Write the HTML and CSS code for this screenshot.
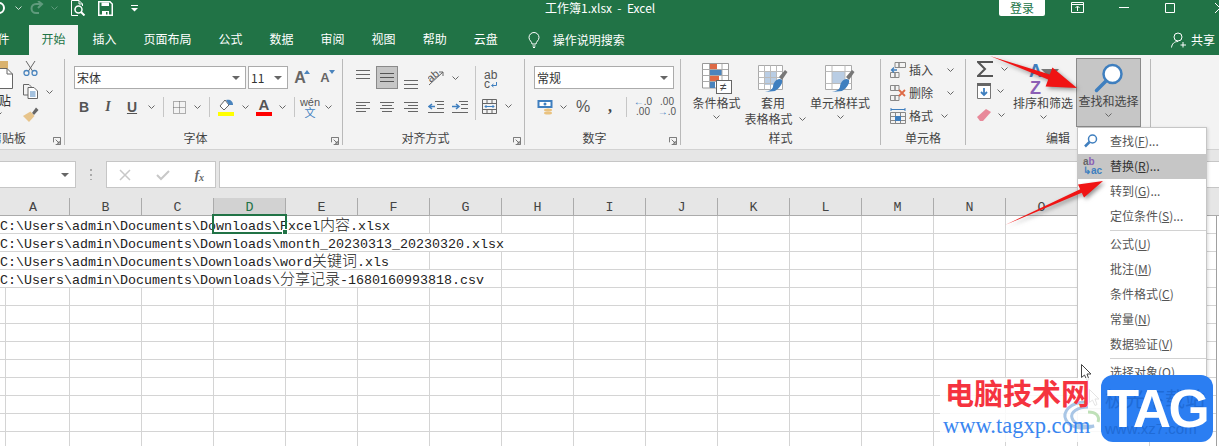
FILE: index.html
```html
<!DOCTYPE html>
<html lang="zh-CN">
<head>
<meta charset="utf-8">
<title>工作簿1.xlsx - Excel</title>
<link rel="stylesheet" href="styles.css">
</head>
<body>
<svg class="defs" width="0" height="0" aria-hidden="true">
  <symbol id="chev" viewBox="0 0 7 4"><path d="M.5.5 3.5 3.5 6.5.5" fill="none" stroke="#666" stroke-width="1"/></symbol>
  <symbol id="launch" viewBox="0 0 9 9"><path d="M.5 6V.5H8.5M8.5.5V8.5H3M3 3 7 7M7 4.5V7H4.5" fill="none" stroke="#666" stroke-width="1"/></symbol>
</svg>

<header class="titlebar">
  <div class="qat">
    <svg class="ic-undo" width="6" height="14" viewBox="0 0 6 14"><path d="M0 2A5 5 0 1 1 0 12" transform="translate(-1 0)" fill="none" stroke="#fff" stroke-width="2"/></svg>
    <svg class="ic-chev1" width="7" height="4"><path d="M.5.5 3.5 3.5 6.5.5" fill="none" stroke="#cfe0d6"/></svg>
    <svg class="ic-redo" width="15" height="14" viewBox="0 0 15 14"><path d="M11 3H6a4.500 4.500 0 0 0 0 9H9M8 0l4 3-4 4" fill="none" stroke="#5f9a7c" stroke-width="2"/></svg>
    <svg class="ic-chev2" width="7" height="4"><path d="M.5.5 3.500 3.500 6.500.5" fill="none" stroke="#5f9a7c"/></svg>
    <svg class="ic-prev" width="16" height="16" viewBox="0 0 16 16"><path d="M9 .5H1.500V15.500H8M9 .5V4H12.500V6M9 .5 12.500 4" fill="none" stroke="#fff"/><circle cx="8.500" cy="9.500" r="3.500" fill="none" stroke="#fff" stroke-width="1.500"/><path d="M11 12l3.500 3.500" stroke="#fff" stroke-width="2"/></svg>
    <svg class="ic-save" width="15" height="15" viewBox="0 0 15 15"><path d="M.75.75H12L14.250 3V14.250H.75Z" fill="none" stroke="#fff" stroke-width="1.500"/><path d="M3.500 1.500H11V5H3.500ZM4 10H11V14H4Z" fill="#fff"/><path d="M8 11H9.500V13.500H8Z" fill="#217346"/></svg>
    <svg class="ic-qat" width="7" height="7" viewBox="0 0 7 7"><path d="M0 .5H7" stroke="#fff"/><path d="M0 3H7L3.500 6.500Z" fill="#fff"/></svg>
  </div>
  <div class="doc-title">工作簿1.xlsx&nbsp;&nbsp;-&nbsp;&nbsp;Excel</div>
  <div class="win">
    <button class="login">登录</button>
    <svg class="ic-disp" width="13" height="11" viewBox="0 0 13 11"><path d="M.5.500H12.500V10.500H.5ZM.5 2.500H12.500M6.500 9V4.500M4.500 6 6.500 4 8.500 6" fill="none" stroke="#fff"/></svg>
    <svg class="ic-min" width="10" height="1"><path d="M0 .5H10" stroke="#fff"/></svg>
    <svg class="ic-max" width="10" height="10"><path d="M.5.500H9.500V9.500H.5Z" fill="none" stroke="#fff"/></svg>
    <svg class="ic-close" width="10" height="10"><path d="M0 0 10 10M10 0 0 10" stroke="#fff"/></svg>
  </div>
</header>

<nav class="tabs">
  <span class="tab tab-file">文件</span>
  <span class="tab tab-on">开始</span>
  <span class="tab">插入</span>
  <span class="tab">页面布局</span>
  <span class="tab">公式</span>
  <span class="tab">数据</span>
  <span class="tab">审阅</span>
  <span class="tab">视图</span>
  <span class="tab">帮助</span>
  <span class="tab">云盘</span>
  <span class="tab tab-search">
    <svg width="12" height="16" viewBox="0 0 12 16"><path d="M4 12C4 9.500 1 8.500 1 5.500A5 5 0 0 1 11 5.500C11 8.500 8 9.500 8 12ZM4.500 14H7.500M5 15.500H7" fill="none" stroke="#fff"/></svg>
    操作说明搜索
  </span>
  <span class="share">
    <svg width="16" height="16" viewBox="0 0 16 16"><circle cx="7" cy="5" r="4" fill="none" stroke="#fff"/><path d="M.5 15.500C1 11.500 3.500 9.500 7 9.500M12 10V15.500M9.500 13H15" fill="none" stroke="#fff"/></svg>
    共享
  </span>
</nav>

<section class="ribbon">
  <div class="group g-clip">
    <div class="body clip-body">
      <div class="paste">
        <svg width="16" height="28" viewBox="0 0 16 28"><rect x="0" y="0" width="10" height="8" fill="#d9b26f"/><path d="M.5 7.500H9L14.500 13V27.500H.5Z" fill="#fff" stroke="#666"/><path d="M9 7.500V13H14.500" fill="none" stroke="#666"/></svg>
        <span class="paste-text">贴</span>
        <svg class="paste-chev" width="7" height="4"><use href="#chev"/></svg>
      </div>
      <div class="clip-tools">
        <svg width="15" height="15" viewBox="0 0 15 15"><path d="M3 0 9.500 10M12 0 5.500 10" stroke="#666" fill="none"/><circle cx="3.500" cy="12" r="2.500" fill="none" stroke="#4a84bd" stroke-width="1.300"/><circle cx="11.500" cy="12" r="2.500" fill="none" stroke="#4a84bd" stroke-width="1.300"/></svg>
        <div class="copy-row">
          <svg width="15" height="15" viewBox="0 0 15 15"><path d="M.5.500H6L8 2.500V11H.5Z" fill="#f3f3f3" stroke="#666"/><path d="M5 3.500H11L14.500 7V14.500H5Z" fill="#fff" stroke="#666"/><path d="M7 8H12.500M7 10H12.500M7 12H12.500" stroke="#4a84bd"/></svg>
          <svg class="copy-chev" width="7" height="4"><use href="#chev"/></svg>
        </div>
        <svg width="16" height="15" viewBox="0 0 16 15"><path d="M9 6 13 .5 15.500 3 11 8Z" fill="#666"/><path d="M0 9 7.500 4.500 11.500 9 6 15Z" fill="#e7c48b"/></svg>
      </div>
    </div>
    <div class="label clip-label">剪贴板</div>
    <svg class="launch" width="8" height="8"><use href="#launch"/></svg>
  </div>

  <div class="group g-font">
    <div class="body font-body">
      <div class="row1">
        <div class="combo combo-font"><span>宋体</span><i class="tri"></i></div>
        <div class="combo combo-size"><span>11</span><i class="tri"></i></div>
        <div class="t w24 grow-a">A<svg width="6" height="4"><path d="M0 4 3 0 6 4Z" fill="#4a84bd"/></svg></div>
        <div class="t w24 shrink-a">A<svg width="6" height="4"><path d="M0 0 3 4 6 0Z" fill="#4a84bd"/></svg></div>
      </div>
      <div class="row2 font-row2">
        <div class="t w24 fb">B</div>
        <div class="t w24 fi">I</div>
        <div class="t w24 fu">U</div>
        <div class="t w14"><svg width="7" height="4"><use href="#chev"/></svg></div>
        <div class="t w10"><i class="sep"></i></div>
        <div class="t w22"><svg width="13" height="13" viewBox="0 0 13 13"><path d="M.5.500H12.500V12.500H.5ZM6.500.5V12.500M.5 6.500H12.500" fill="none" stroke="#666" stroke-dasharray="1 1"/></svg></div>
        <div class="t w14"><svg width="7" height="4"><use href="#chev"/></svg></div>
        <div class="t w10"><i class="sep"></i></div>
        <div class="t w24"><svg width="16" height="17" viewBox="0 0 16 17"><path d="M2 7 7 1 11 6 6 11Z" fill="#fff" stroke="#666"/><path d="M8 1C12 0 15 2 15 6L11 6Z" fill="#4a84bd"/><rect y="13" width="16" height="4" fill="#ff0"/></svg></div>
        <div class="t w14"><svg width="7" height="4"><use href="#chev"/></svg></div>
        <div class="t w24 color-a">A<i class="redbar"></i></div>
        <div class="t w13"><svg width="7" height="4"><use href="#chev"/></svg></div>
        <div class="t w10"><i class="sep"></i></div>
        <div class="t w22 wen"><span>wén</span><b>文</b></div>
        <div class="t w14"><svg width="7" height="4"><use href="#chev"/></svg></div>
      </div>
    </div>
    <div class="label lb-l">字体</div>
    <svg class="launch" width="8" height="8"><use href="#launch"/></svg>
  </div>

  <div class="group g-align">
    <div class="body align-body">
      <div class="align-left">
        <div class="row1 gap2">
          <div class="t w22 top-a"><svg width="14" height="9" viewBox="0 0 14 9"><path d="M0 .5H14M0 4.500H14M0 8.500H14" stroke="#666"/></svg></div>
          <div class="t w22 active"><svg width="14" height="9" viewBox="0 0 14 9"><path d="M0 .5H14M0 4.500H14M0 8.500H14" stroke="#555"/></svg></div>
          <div class="t w22 bot-a"><svg width="14" height="9" viewBox="0 0 14 9"><path d="M0 .5H14M0 4.500H14M0 8.500H14" stroke="#666"/></svg></div>
          <div class="t w24"><svg width="16" height="16" viewBox="0 0 16 16"><path d="M1 15 15 2M15 2H11M15 2V6" fill="none" stroke="#666"/><text x="0" y="10" class="svg-ab" transform="rotate(-40 5 8)">ab</text></svg></div>
          <div class="t w10"><svg width="7" height="4"><use href="#chev"/></svg></div>
        </div>
        <div class="row2 gap2">
          <div class="t w22"><svg width="14" height="11" viewBox="0 0 14 11"><path d="M0 .5H14M0 3.500H10M0 6.500H14M0 9.500H10" stroke="#666"/></svg></div>
          <div class="t w22"><svg width="14" height="11" viewBox="0 0 14 11"><path d="M0 .5H14M2 3.500H12M0 6.500H14M2 9.500H12" stroke="#666"/></svg></div>
          <div class="t w22"><svg width="14" height="11" viewBox="0 0 14 11"><path d="M0 .5H14M4 3.500H14M0 6.500H14M4 9.500H14" stroke="#666"/></svg></div>
          <div class="t w24"><svg width="16" height="12" viewBox="0 0 16 12"><path d="M7 .5H16M9 3.500H16M9 7.500H16M0 11.500H16" stroke="#666"/><path d="M7 5.500H2M4 3 1 5.500 4 8" fill="none" stroke="#3f7fbf" stroke-width="1.500"/></svg></div>
          <div class="t w20"><svg width="16" height="12" viewBox="0 0 16 12"><path d="M7 .5H16M9 3.500H16M9 7.500H16M0 11.500H16" stroke="#666"/><path d="M0 5.500H6M4 3 7 5.500 4 8" fill="none" stroke="#3f7fbf" stroke-width="1.500"/></svg></div>
        </div>
      </div>
      <i class="vsep"></i>
      <div class="align-right">
        <div class="wrap-ic"><span>ab</span><span>c<svg width="6" height="6" viewBox="0 0 6 6"><path d="M5.500 0V3.500H1M2.500 2 .5 3.500 2.500 5" fill="none" stroke="#3f7fbf"/></svg></span></div>
        <div class="merge">
          <svg width="15" height="15" viewBox="0 0 15 15"><path d="M.5.500H14.500V14.500H.5ZM.5 4.500H14.500M.5 10.500H14.500M5 .5V4.500M10 .5V4.500M5 10.500V14.500M10 10.500V14.500" fill="none" stroke="#666"/><path d="M3 7.500H12M4.500 6 3 7.500 4.500 9M10.500 6 12 7.500 10.500 9" fill="none" stroke="#3f7fbf"/></svg>
          <svg width="7" height="4"><use href="#chev"/></svg>
        </div>
      </div>
    </div>
    <div class="label lb-l">对齐方式</div>
    <svg class="launch" width="8" height="8"><use href="#launch"/></svg>
  </div>

  <div class="group g-num">
    <div class="body num-body">
      <div class="combo combo-num"><span>常规</span><i class="tri"></i></div>
      <div class="row2 num-row2">
        <div class="t w18"><svg width="17" height="17" viewBox="0 0 17 17"><rect x=".5" y="1" width="15" height="8" fill="#3f7fbf"/><rect x="2.500" y="3" width="11" height="4" fill="#fff"/><circle cx="8" cy="5" r="1.500" fill="#3f7fbf"/><ellipse cx="11" cy="11" rx="4" ry="1.500" fill="#e9c27f"/><ellipse cx="11" cy="14" rx="4" ry="1.500" fill="#e9c27f"/></svg></div>
        <div class="t w14 ml2"><svg width="7" height="4"><use href="#chev"/></svg></div>
        <div class="t w24 pct">%</div>
        <div class="t w22 comma">,</div>
        <div class="t w10"><i class="sep"></i></div>
        <div class="t w24 dec"><span><em>←</em>.0</span><span>.00</span></div>
        <div class="t w24 dec"><span>.00</span><span><em>→</em>.0</span></div>
      </div>
    </div>
    <div class="label lb-l">数字</div>
    <svg class="launch" width="8" height="8"><use href="#launch"/></svg>
  </div>

  <div class="group g-style">
    <div class="body style-body">
      <div class="big b1">
        <svg class="big-ic" width="30" height="32" viewBox="0 0 30 32"><path d="M.5.500H26.500V25H.5Z" fill="#fff" stroke="#999"/><rect x="8" y="1" width="7" height="5" fill="#de6a46"/><rect x="8" y="7" width="12" height="5" fill="#4a84bd"/><rect x="8" y="13" width="9" height="5" fill="#de6a46"/><rect x="8" y="19" width="5" height="6" fill="#4a84bd"/><path d="M7.500 1V25M20 1V22M.5 6.500H26M.5 12.500H26M.5 18.500H26" stroke="#aaa" fill="none"/><rect x="14.500" y="17.500" width="15" height="13" fill="#fff" stroke="#666"/><text x="18" y="28" class="svg-ne">≠</text></svg>
        <span class="big-t">条件格式</span>
        <svg class="big-c" width="7" height="4"><use href="#chev"/></svg>
      </div>
      <div class="big b2">
        <svg class="big-ic" width="30" height="32" viewBox="0 0 30 32"><path d="M.5 2.500H24.500V26.500H.5Z" fill="#fff" stroke="#aaa"/><rect x="6" y="8" width="13" height="14" fill="#b9cde4"/><path d="M6.500 2.500V26.500M12.500 2.500V26.500M18.500 2.500V26.500M.5 8.500H24.500M.5 14.500H24.500M.5 20.500H24.500" stroke="#bbb" fill="none"/><path d="M21 14 27 7 29.500 9 24 17Z" fill="#777"/><path d="M15 24C15 19 20 14 24 17 25 20 22 25 17 28L7 29C11 28 14 27 15 24Z" fill="#3f7fbf"/></svg>
        <span class="big-t">套用</span>
        <span class="big-t two">表格格式<svg width="7" height="4"><use href="#chev"/></svg></span>
      </div>
      <div class="big b3">
        <svg class="big-ic" width="30" height="32" viewBox="0 0 30 32"><path d="M.5 2.500H26.500V26.500H.5Z" fill="#fff" stroke="#aaa"/><rect x="7" y="8" width="13" height="12" fill="#b9cde4"/><path d="M7 2.500V26.500M20 2.500V26.500M.5 8.500H26.500M.5 20.500H26.500" stroke="#bbb" fill="none"/><path d="M21 14 27 7 29.500 9 24 17Z" fill="#777"/><path d="M15 24C15 19 20 14 24 17 25 20 22 25 17 28L7 29C11 28 14 27 15 24Z" fill="#3f7fbf"/></svg>
        <span class="big-t">单元格样式</span>
        <svg class="big-c" width="7" height="4"><use href="#chev"/></svg>
      </div>
    </div>
    <div class="label">样式</div>
  </div>

  <div class="group g-cell">
    <div class="body cell-body">
      <div class="crow">
        <svg width="16" height="16" viewBox="0 0 16 16"><path d="M5 .5H9V5.500H5ZM9 .5H15.500V5.500H9ZM.5 10.500H5V15.500H.5ZM5 10.500H9V15.500H5Z" fill="none" stroke="#888"/><path d="M7 8H1.500M4 5.500 1.500 8 4 10.500" fill="none" stroke="#3f7fbf" stroke-width="1.300"/></svg>
        <span>插入</span><svg class="cchev" width="7" height="4"><use href="#chev"/></svg>
      </div>
      <div class="crow">
        <svg width="16" height="16" viewBox="0 0 16 16"><path d="M.5.500H5V5.500H.5ZM5 .5H9V5.500H5ZM.5 10.500H5V15.500H.5ZM5 10.500H9V15.500H5Z" fill="none" stroke="#888"/><path d="M9 5 15 11M15 5 9 11" stroke="#de6a46" stroke-width="1.800"/></svg>
        <span>删除</span><svg class="cchev" width="7" height="4"><use href="#chev"/></svg>
      </div>
      <div class="crow">
        <svg width="16" height="16" viewBox="0 0 16 16"><path d="M.5 4.500H15.500V15.500H.5ZM5.500 4.500V15.500M10.500 4.500V15.500M.5 8.500H15.500M.5 12.500H15.500" fill="none" stroke="#888"/><rect x="5" y="8" width="6" height="5" fill="#3f7fbf"/><path d="M1 1.500H15M1 0V3M15 0V3" stroke="#3f7fbf" fill="none"/></svg>
        <span>格式</span><svg class="cchev short" width="7" height="4"><use href="#chev"/></svg>
      </div>
    </div>
    <div class="label">单元格</div>
  </div>

  <div class="group g-edit">
    <div class="body edit-body">
      <div class="ecol">
        <div class="erow e-sum"><svg width="16" height="16" viewBox="0 0 16 16"><path d="M15 2V1H1L8 8 1 15H15V14" fill="none" stroke="#555" stroke-width="2"/></svg><svg width="7" height="4"><use href="#chev"/></svg></div>
        <div class="erow"><svg width="14" height="16" viewBox="0 0 14 16"><path d="M.5.500H13.500V15.500H.5Z" fill="#fff" stroke="#777"/><rect y="0" width="14" height="3" fill="#666"/><path d="M7 5V12M4 9 7 12 10 9" fill="none" stroke="#3f7fbf" stroke-width="1.800"/></svg><svg width="7" height="4"><use href="#chev"/></svg></div>
        <div class="erow"><svg width="15" height="14" viewBox="0 0 15 14"><path d="M0 9 9 1 14 4 6 13H3Z" fill="#e8899a"/></svg><svg width="7" height="4"><use href="#chev"/></svg></div>
      </div>
      <div class="big b-sort">
        <svg class="big-ic" width="32" height="32" viewBox="0 0 32 32"><text x="2" y="14" class="svg-az a">A</text><text x="3" y="31" class="svg-az z">Z</text><path d="M14 6H32L26 13V20L21 23V13Z" fill="#777"/></svg>
        <span class="big-t">排序和筛选</span>
        <svg class="big-c" width="7" height="4"><use href="#chev"/></svg>
      </div>
      <div class="big b-find">
        <svg class="big-ic" width="30" height="30" viewBox="0 0 30 30"><circle cx="18.500" cy="11" r="9" fill="#fff" stroke="#3f7fbf" stroke-width="2.500"/><path d="M12 18 2.500 27.500" stroke="#3f7fbf" stroke-width="3.500" stroke-linecap="round"/></svg>
        <span class="big-t">查找和选择</span>
        <svg class="big-c" width="7" height="4"><use href="#chev"/></svg>
      </div>
    </div>
    <div class="label">编辑</div>
  </div>
</section>

<section class="fbar">
  <div class="namebox"><i class="tri"></i></div>
  <div class="dots"></div>
  <div class="fx-btns">
    <svg width="12" height="12" viewBox="0 0 12 12"><path d="M1 1 11 11M11 1 1 11" stroke="#c8c8c8" stroke-width="1.500"/></svg>
    <svg width="14" height="12" viewBox="0 0 14 12"><path d="M1 6 5 10 13 2" fill="none" stroke="#c8c8c8" stroke-width="2"/></svg>
    <span class="fx">f<sub>x</sub></span>
  </div>
  <div class="finput"></div>
</section>

<section class="colhead">
  <span class="col">A</span><span class="col">B</span><span class="col">C</span><span class="col col-on">D</span><span class="col">E</span><span class="col">F</span><span class="col">G</span><span class="col">H</span><span class="col">I</span><span class="col">J</span><span class="col">K</span><span class="col">L</span><span class="col">M</span><span class="col">N</span><span class="col">O</span><span class="col">P</span><span class="col">Q</span>
</section>

<main class="sheet">
  <div class="dr"><span class="txt s429">C:\Users\admin\Documents\Downloads\Excel<span class="zh">内容</span>.xlsx</span></div>
  <div class="dr"><span class="txt s573">C:\Users\admin\Documents\Downloads\month_20230313_20230320.xlsx</span></div>
  <div class="dr"><span class="txt s429">C:\Users\admin\Documents\Downloads\word<span class="zh">关键词</span>.xls</span></div>
  <div class="dr"><span class="txt s501">C:\Users\admin\Documents\Downloads\<span class="zh">分享记录</span>-1680160993818.csv</span></div>
</main>

<div class="cursor-cell"><i class="handle"></i></div>

<div class="menu">
  <div class="mi">
    <svg class="mi-ic" width="14" height="14" viewBox="0 0 14 14"><circle cx="8.500" cy="5" r="4" fill="#fff" stroke="#3f7fbf" stroke-width="1.500"/><path d="M5.500 8 1 12.500" stroke="#3f7fbf" stroke-width="2.500"/></svg>
    查找(<u>F</u>)...
  </div>
  <div class="mi mi-on">
    <span class="mi-ic abac"><span>a<b>b</b></span><span><em>↳</em>ac</span></span>
    替换(<u>R</u>)...
  </div>
  <div class="mi">转到(<u>G</u>)...</div>
  <div class="mi">定位条件(<u>S</u>)...</div>
  <div class="msep"></div>
  <div class="mi">公式(<u>U</u>)</div>
  <div class="mi">批注(<u>M</u>)</div>
  <div class="mi">条件格式(<u>C</u>)</div>
  <div class="mi">常量(<u>N</u>)</div>
  <div class="mi">数据验证(<u>V</u>)</div>
  <div class="msep"></div>
  <div class="mi">
    <svg class="mi-ic ptr" width="11" height="17" viewBox="0 0 11 17"><path d="M.5.500V13.500L3.500 11 6 16.500 8 15.500 6 10H10Z" fill="#fff" stroke="#444"/></svg>
    选择对象(<u>O</u>)
  </div>
  <div class="mi">
    <svg class="mi-ic ptr2" width="11" height="17" viewBox="0 0 11 17"><path d="M.5.500V13.500L3.500 11 6 16.500 8 15.500 6 10H10Z" fill="#fff" stroke="#444"/></svg>
    选择窗格(<u>P</u>)...
  </div>
</div>

<svg class="arrows" width="1219" height="446" viewBox="0 0 1219 446" aria-hidden="true">
  <polygon points="990,56 1049.800,74.600 1052.400,67.600 1077,88 1045.600,86.400 1048.200,79.400" fill="#f01414"/>
  <polygon points="1005,225 1080.200,189.200 1078,184.600 1103,181 1084,197.400 1081.800,192.800" fill="#f01414"/>
</svg>

<aside class="wm">
  <div class="wm-text">
    <svg class="swirl" width="42" height="32" viewBox="0 0 42 32"><path d="M26 2C10 2 2 12 6 20 10 28 24 30 34 26 24 27 14 25 12 18 10 12 18 7 28 7" fill="none" stroke="#a9c6e6" stroke-width="3"/><path d="M28 12C36 12 40 16 38 22" fill="none" stroke="#bfe0b8" stroke-width="3"/></svg>
    <div class="wm-cn">电脑技术网</div>
    <div class="wm-url">www.tagxp.com</div>
  </div>
  <div class="wm-tag">
    <span class="ghost g1">极光下载站</span>
    <span class="ghost g2">www.xz7.com</span>
    <span class="wm-tagt">TAG</span>
  </div>
</aside>
</body>
</html>
```
FILE: styles.css
```css
* { box-sizing: border-box; }
html, body { margin: 0; padding: 0; }
body {
  width: 1219px; height: 446px; overflow: hidden; position: relative; background: #fff;
  font-family: "Noto Sans CJK SC", "Noto Sans", sans-serif; font-size: 12px; color: #444;
}
.defs { position: absolute; }
i, em { font-style: normal; }

/* title bar */
.titlebar { height: 25px; background: #217346; color: #fff; display: flex; align-items: flex-start; }
.qat { width: 545px; height: 16px; display: flex; align-items: center; flex: none; }
.ic-chev1 { margin-left: 9px; }
.ic-redo { margin-left: 8px; }
.ic-chev2 { margin-left: 6px; }
.ic-prev { margin-left: 12px; }
.ic-save { margin-left: 12px; }
.ic-qat { margin-left: 18px; }
.doc-title { font-size: 12px; line-height: 15px; white-space: nowrap; width: 454px; flex: none; }
.win { display: flex; align-items: center; height: 15px; }
.login { width: 46px; height: 16px; border: 0; border-radius: 0 0 2px 2px; background: #fff; color: #217346; font: 12px/14px "Noto Sans CJK SC", sans-serif; padding: 0; }
.ic-disp { margin-left: 26px; }
.ic-min { margin-left: 35px; }
.ic-max { margin-left: 36px; }
.ic-close { margin-left: 40px; flex: none; }

/* tabs */
.tabs { height: 30px; background: #217346; color: #fff; display: flex; align-items: stretch; line-height: 28px; }
.tab { padding: 0 12.5px; margin: 0 1px; white-space: nowrap; }
.tab-file { margin-left: -27px; margin-right: 6px; }
.tab-on { background: #f3f3f3; color: #217346; }
.tab-search { display: flex; align-items: center; gap: 13px; margin-left: 4px; }
.share { margin-left: auto; display: flex; align-items: center; gap: 4px; padding-right: 4px; }

/* ribbon */
.ribbon { height: 95px; background: #f3f3f3; border-bottom: 1px solid #d2d2d2; display: flex; padding-top: 4px; }
.group { height: 86px; flex: none; border-right: 1px solid #b9b9b9; display: flex; flex-direction: column; position: relative; }
.g-clip { width: 65px; }
.g-font { width: 278px; }
.g-align { width: 182px; }
.g-num { width: 156px; }
.g-style { width: 200px; }
.g-cell { width: 85px; }
.g-edit { width: 185px; }
.body { flex: 1; min-height: 0; }
.label { height: 16px; line-height: 16px; text-align: center; margin-bottom: -1px; color: #444; flex: none; }
.lb-l { padding-right: 16px; }
.launch { position: absolute; right: 3px; bottom: 0; }

.t { display: flex; justify-content: center; align-items: center; height: 22px; flex: none; position: relative; }
.w10 { width: 10px; } .w13 { width: 13px; } .w14 { width: 14px; } .w18 { width: 18px; }
.w20 { width: 20px; } .w22 { width: 22px; } .w24 { width: 24px; }
.ml2 { margin-left: 2px; }
.sep { display: block; width: 1px; height: 20px; background: #c6c6c6; }
.row1 { display: flex; align-items: center; height: 23px; }
.row2 { display: flex; align-items: center; height: 22px; margin-top: 7px; }
.gap2 { gap: 2px; }

.combo { height: 23px; background: #fff; border: 1px solid #ababab; display: flex; align-items: center; justify-content: space-between; padding: 0 5px 0 2px; color: #333; flex: none; }
.combo span { line-height: 20px; }
.tri { display: block; width: 0; height: 0; border: 4px solid transparent; border-top-color: #666; border-bottom: 0; }

/* clipboard */
.clip-body { display: flex; padding-top: 2px; }
.paste { width: 22px; flex: none; display: flex; flex-direction: column; margin-left: -2px; }
.paste-text { line-height: 16px; margin-top: 3px; font-size: 13px; color: #333; }
.paste-chev { margin: 4px 0 0 -3px; }
.clip-tools { display: flex; flex-direction: column; align-items: flex-start; margin-left: 3px; gap: 8px; }
.copy-row { display: flex; align-items: center; }
.copy-chev { margin-left: 8px; }
.clip-label { text-align: left; margin-left: -10px; }

/* font */
.font-body { padding: 7px 0 0 9px; }
.combo-font { width: 172px; }
.combo-size { width: 40px; margin-left: 2px; }
.grow-a, .shrink-a { font: 700 16px "Liberation Sans", sans-serif; color: #666; }
.shrink-a { margin-left: 1px; font-size: 13px; }
.grow-a svg, .shrink-a svg { position: absolute; top: 3px; right: 2px; }
.font-row2 { margin-left: -2px; }
.fb, .fi, .fu, .color-a { font: 700 14px "Liberation Sans", sans-serif; color: #555; }
.fi { font: italic 700 14px "Liberation Serif", serif; }
.fu { text-decoration: underline; }
.color-a { flex-direction: column; font-size: 15px; line-height: 14px; }
.redbar { display: block; width: 16px; height: 4px; background: #f00; }
.wen { flex-direction: column; font: 11px/10px "Liberation Sans", sans-serif; color: #555; }
.wen b { color: #3f7fbf; font: 11px/10px "Noto Sans CJK SC", sans-serif; }

/* align */
.align-body { padding: 7px 0 0 9px; display: flex; }
.active { height: 23px; background: #c6c6c6; border: 1px solid #8a8a8a; }
.top-a { align-items: flex-start; padding-top: 3px; }
.bot-a { align-items: flex-end; }
.svg-ab { font: 11px "Liberation Sans", sans-serif; fill: #555; }
.svg-ne { font: 12px "Liberation Sans", sans-serif; fill: #444; }
.align-left { width: 122px; flex: none; }
.vsep { width: 1px; height: 54px; background: #c6c6c6; margin: 0 0 0 1px; }
.align-right { margin-left: 6px; display: flex; flex-direction: column; }
.wrap-ic { display: flex; flex-direction: column; font: 12px/9px "Liberation Sans", sans-serif; color: #555; height: 29px; padding: 5px 0 0 2px; }
.wrap-ic svg { margin-left: 1px; }
.merge { display: flex; align-items: center; gap: 8px; height: 22px; }

/* number */
.num-body { padding: 7px 0 0 9px; }
.combo-num { width: 140px; }
.num-row2 { margin-left: 2px; }
.pct { font: 16px "Liberation Sans", sans-serif; color: #555; margin-left: 1px; }
.comma { font: 700 16px "Liberation Serif", serif; color: #444; margin-left: 4px; }
.dec { flex-direction: column; font: 10px/10px "Liberation Sans", sans-serif; color: #555; }
.dec em { color: #3f7fbf; font-weight: 700; }

/* big buttons */
.style-body { display: flex; padding-left: 2px; }
.big { display: flex; flex-direction: column; align-items: center; padding-top: 4px; flex: none; }
.big-ic { flex: none; }
.big-t { line-height: 16px; white-space: nowrap; color: #444; display: flex; align-items: center; }
.big-t.two { gap: 6px; margin-left: 4px; }
.big-c { margin-top: 4px; }
.b1 { width: 67px; }
.b2 { width: 46px; }
.b3 { width: 58px; margin-left: 15px; }

/* cells */
.cell-body { padding: 0 0 0 9px; display: flex; flex-direction: column; margin-top: -1px; }
.crow { display: flex; align-items: center; height: 23px; gap: 3px; }
.crow .cchev { margin-left: 11px; }
.crow .cchev.short { margin-left: 5px; }

/* editing */
.edit-body { display: flex; padding-left: 11px; }
.ecol { width: 34px; flex: none; display: flex; flex-direction: column; }
.erow { display: flex; align-items: center; height: 24px; gap: 6px; }
.e-sum { gap: 8px; height: 20px; }
.b-sort { width: 64px; }
.b-find { width: 65px; height: 69px; margin: -1px 0 0 1px; background: #c6c6c6; border: 1px solid #8a8a8a; padding-top: 4px; }
.svg-az { font: 700 18px "Liberation Sans", sans-serif; }
.svg-az.a { fill: #3f7fbf; }
.svg-az.z { fill: #8c5fb5; }

/* formula bar */
.fbar { height: 48px; background: #e6e6e6; display: flex; padding-top: 11px; align-items: flex-start; }
.namebox { width: 76px; height: 27px; background: #fff; border: 1px solid #c6c6c6; border-left: 0; display: flex; align-items: center; justify-content: flex-end; padding-right: 6px; }
.dots { width: 2px; height: 11px; margin: 8px 14px 0 14px; background: repeating-linear-gradient(#aaa 0 2px, transparent 2px 5px); }
.fx-btns { width: 110px; height: 27px; background: #fff; border: 1px solid #c6c6c6; display: flex; align-items: center; justify-content: space-between; padding: 0 11px 0 12px; }
.fx { font: italic 700 13px "Liberation Serif", serif; color: #666; }
.fx sub { font-size: 10px; vertical-align: -2px; line-height: 0; }
.finput { flex: 1; height: 27px; margin-left: 3px; background: #fff; border: 1px solid #c6c6c6; border-right: 0; }

/* sheet */
.colhead { height: 18px; background: #e6e6e6; border-bottom: 1px solid #ababab; display: flex; overflow: hidden; }
.col { width: 72px; flex: none; text-align: center; font: 13.33px/20px "Liberation Mono", monospace; color: #444; border-right: 1px solid #ababab; height: 17px; overflow: hidden; }
.col:first-child { width: 70px; text-indent: -3px; }
.col-on { background: #d2d2d2; color: #217346; }
.sheet {
  height: 231px; width: 1217px; border-right: 1px solid #a0a0a0; background-color: #fff;
  background-image: repeating-linear-gradient(to bottom, transparent 0 17px, #d4d4d4 17px 18px), repeating-linear-gradient(to right, #d4d4d4 0 1px, transparent 1px 72px);
  background-position: 0 0, 69px 0;
}
.dr { height: 18px; overflow: hidden; }
.txt { display: block; height: 17px; background: #fff; font: 13.33px/21px "Liberation Mono", monospace; color: #222; white-space: pre; overflow: hidden; }
.s429 { width: 429px; } .s501 { width: 501px; } .s573 { width: 573px; }
.zh { font: 300 15px/10px "Noto Sans CJK SC", sans-serif; }

.cursor-cell { position: absolute; left: 212px; top: 214px; width: 75px; height: 20px; border: 2px solid #217346; }
.handle { position: absolute; right: -3px; bottom: -3px; width: 6px; height: 6px; background: #217346; border: 1px solid #fff; }

/* menu */
.menu { position: absolute; left: 1077px; top: 127px; width: 130px; height: 282px; background: #fff; border: 1px solid #c6c6c6; box-shadow: 1px 1px 3px rgba(0,0,0,.15); padding-top: 1px; }
.mi { height: 25px; line-height: 23px; padding-left: 32px; color: #555; position: relative; white-space: nowrap; }
.mi u { text-underline-offset: 1px; }
.mi-on { background: #c6c6c6; color: #333; }
.msep { height: 1px; margin: 1px 0 1px 32px; background: #d2d2d2; }
.mi-ic { position: absolute; left: 6px; top: 5px; }
.ptr { left: 3px; top: 4px; }
.ptr2 { left: 11px; top: 4px; }
.abac { display: flex; flex-direction: column; font: 700 10px/9px "Liberation Sans", sans-serif; color: #666; left: 5px; top: 3px; }
.abac b { color: #8c5fb5; }
.abac span + span { color: #3f7fbf; }

/* overlays */
.arrows { position: absolute; left: 0; top: 0; pointer-events: none; filter: drop-shadow(2px 2px 2px rgba(60,60,60,.55)); }
.wm { position: absolute; left: 940px; top: 375px; width: 273px; height: 67px; display: flex; }
.wm-text { width: 161px; height: 64px; margin-top: 3px; background: rgba(255,255,255,.85); padding-left: 3px; position: relative; }
.swirl { position: absolute; left: 120px; top: 22px; }
.wm-cn { font: 700 29px/30px "Noto Sans CJK SC", sans-serif; color: #f5333f; white-space: nowrap; margin-top: -1px; padding-left: 2px; position: relative; }
.wm-url { font: 22.5px/24px "Liberation Serif", serif; color: #3a86f0; margin-top: 7px; white-space: nowrap; position: relative; }
.wm-tag { width: 112px; height: 67px; background: #2b7ef2; border-radius: 12px; position: relative; overflow: hidden; display: flex; align-items: center; justify-content: center; }
.wm-tagt { font: 700 53px/60px "Liberation Sans", sans-serif; color: #fff; letter-spacing: -2.5px; position: relative; }
.ghost { position: absolute; left: 4px; white-space: nowrap; color: #1f6bd6; }
.g1 { top: 12px; font-size: 20px; line-height: 24px; }
.g2 { top: 45px; font: 15px/18px "Liberation Sans", sans-serif; }
```
